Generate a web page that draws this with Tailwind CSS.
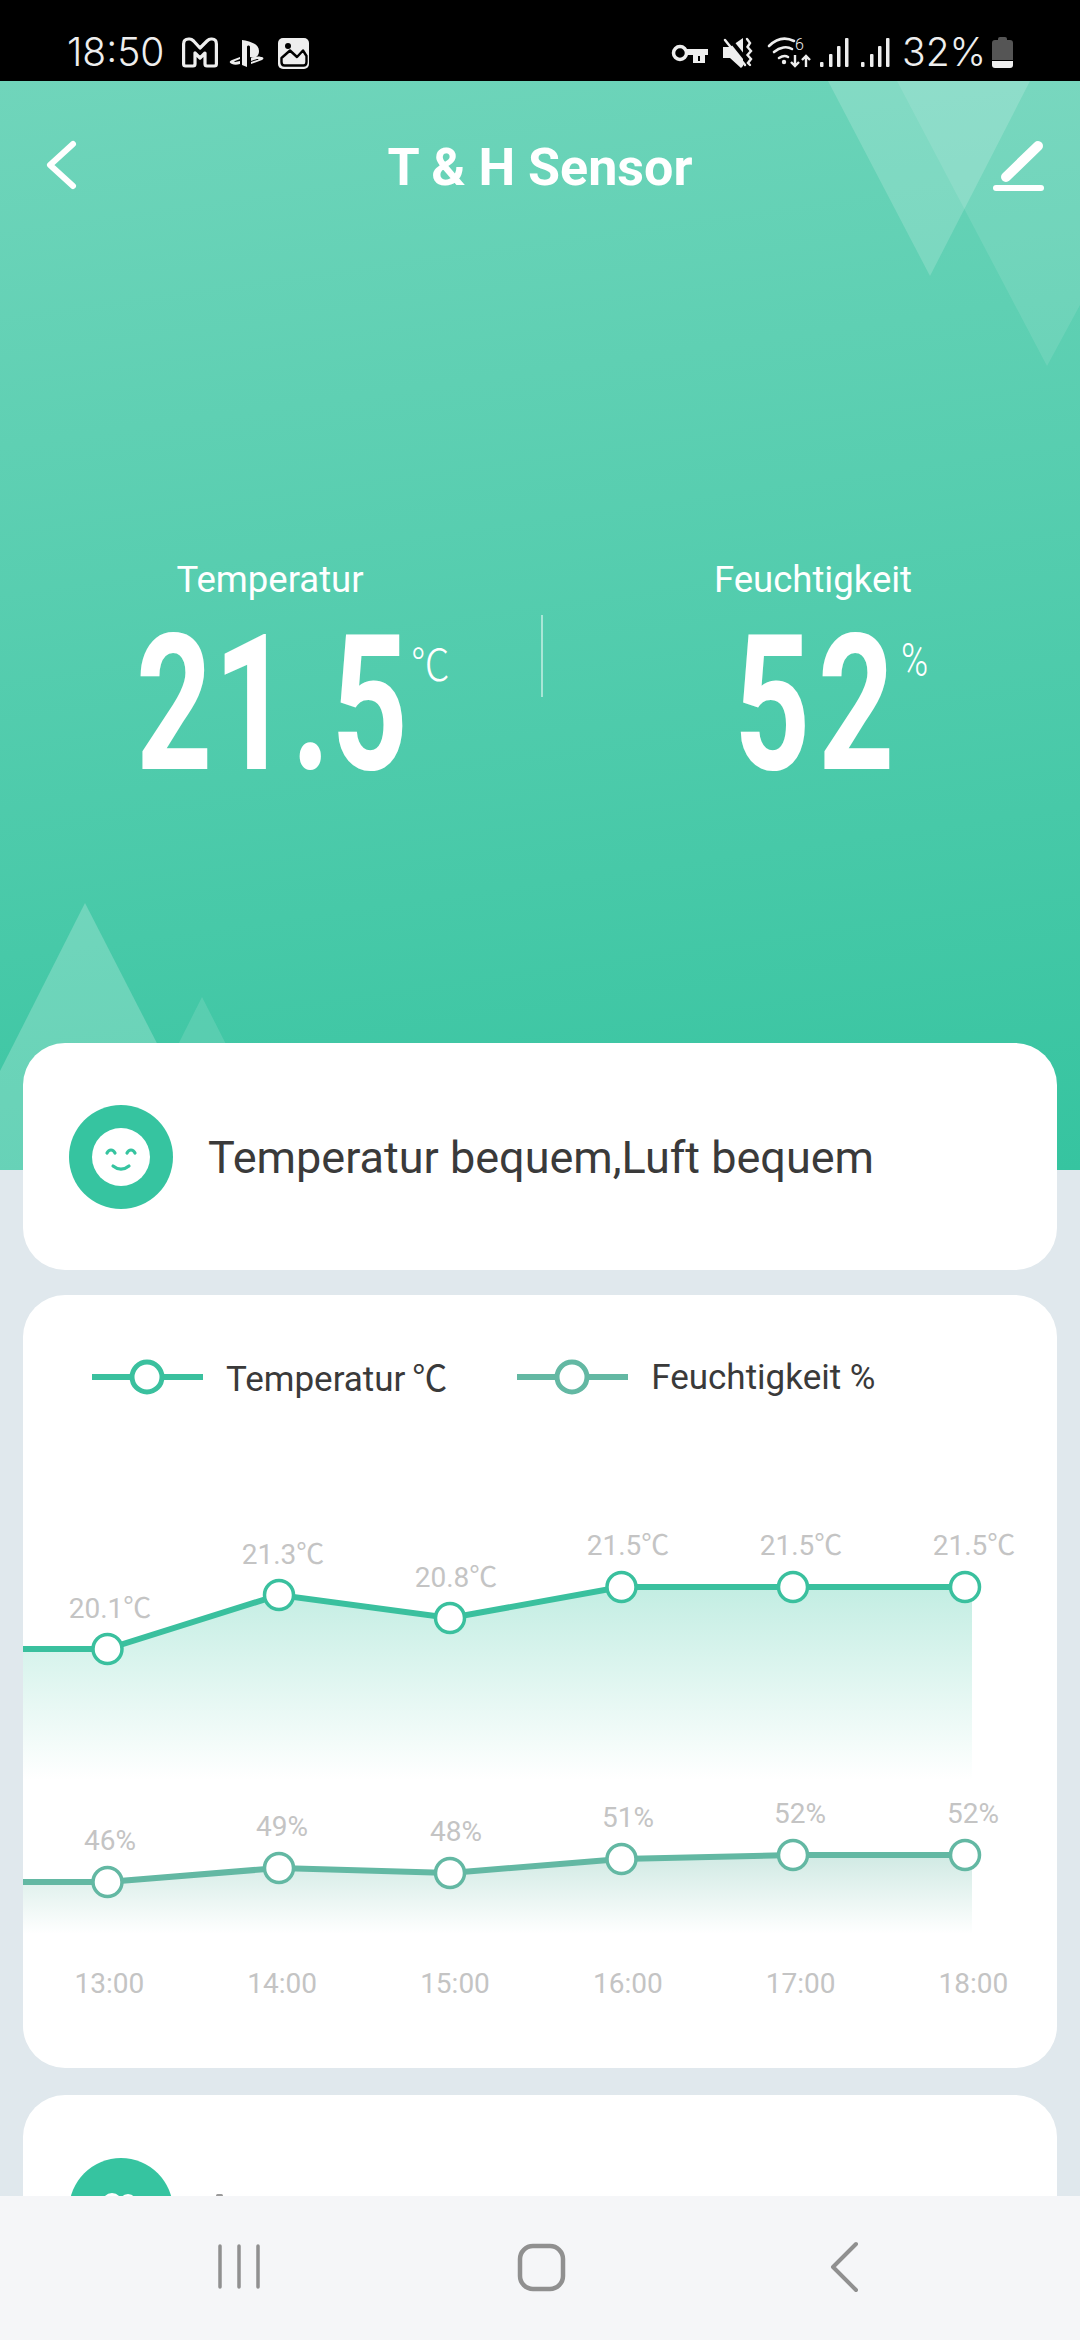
<!DOCTYPE html>
<html><head><meta charset="utf-8">
<script src="https://cdn.jsdelivr.net/npm/@tailwindcss/browser@4"></script>
</head>
<body>
<div class="relative w-[1080px] h-[2340px] overflow-hidden bg-[#e0e8ed] font-['Roboto','Noto_Sans_CJK_SC',sans-serif]">
  <!-- status bar -->
  <div class="relative h-[81px] bg-black text-[#eeeeee] font-['Inter',sans-serif] font-light">
    <span class="absolute left-[67px] top-[29px] text-[39px] leading-[46px]">18:50</span>
    <svg class="absolute left-0 top-0" width="1080" height="81" viewBox="0 0 1080 81" fill="none">
      <path d="M183.6 64V44q0-5 5-5h1q2 0 4 2L200 48L207 41q2-2 4-2h1q4.4 0 4.4 5V64q0 2-2 2H207q-2 0-2-2V53L200 58L195 53V64q0 2-2 2H185.6q-2 0-2-2z" stroke="#eee" stroke-width="3.2" stroke-linejoin="round"/>
      <path d="M242 40c6 1 17 3 17 11 0 6-5 8-9 6V47c0-2-3-2-3 0v20l-5-2z" fill="#eee"/>
      <path d="M240 57l-8 3c-3 1-3 3 0 4 2 1 5 1 8 0v-3l-5 1c-1 0-1-1 0-1l5-2z" fill="#eee"/>
      <path d="M251 64l11-4c2-1 2-3-1-3-3-1-7 0-10 1v3l6-2c2 0 2 1 0 1l-6 2z" fill="#eee"/>
      <rect x="278" y="38" width="31" height="31" rx="5" fill="#eee"/>
      <path d="M281.5 58L290 50.5L297 57L303 50.5L306.5 56V62q0 3.5-3 3.5H284.5q-3 0-3-3.5Z" fill="#eee" stroke="#000" stroke-width="2.4" stroke-linejoin="round"/>
      <circle cx="288" cy="46" r="3" fill="#000"/>
      <!-- key -->
      <circle cx="680" cy="53" r="6.5" stroke="#eee" stroke-width="3.5"/>
      <path d="M687 49h21v6h-3v8h-12v-8h-6z" fill="#eee"/>
      <path d="M699 56v5" stroke="#000" stroke-width="2"/>
      <!-- mute -->
      <path d="M723 47h7l13-9v28l-2 2-11-10h-7z" fill="#eee"/>
      <path d="M728 37l20 25" stroke="#000" stroke-width="4"/>
      <path d="M725 40l20 25" stroke="#eee" stroke-width="2.5" stroke-linecap="round"/>
      <path d="M747 39l3 4-2.500 4 3.500 4-3.500 4 3.500 4-3 4 2 2" stroke="#eee" stroke-width="2.4" stroke-linecap="round"/>
      <!-- wifi -->
      <path d="M769 46c8-8 17-9 25-5M774 52c6-5 13-6 18-3M779 58c3-2 6-3 9-1" stroke="#eee" stroke-width="2.6" stroke-linecap="round"/>
      <circle cx="784" cy="62" r="2.2" fill="#eee"/>
      <path d="M795 55v11m-4-4l4 4 4-4M806 67v-11m-4 4l4-4 4 4" stroke="#eee" stroke-width="2.4"/>
      <text x="795" y="50" font-size="16" fill="#eee" font-family="Roboto">6</text>
      <!-- signal -->
      <g fill="#eee">
        <rect x="820" y="62" width="3.5" height="5" rx="1"/><rect x="829" y="54" width="3.5" height="13" rx="1"/><rect x="837" y="46" width="3.5" height="21" rx="1"/><rect x="845" y="38" width="3.5" height="29" rx="1"/>
        <rect x="861" y="62" width="3.5" height="5" rx="1"/><rect x="870" y="54" width="3.5" height="13" rx="1"/><rect x="878" y="46" width="3.5" height="21" rx="1"/><rect x="886" y="38" width="3.5" height="29" rx="1"/>
      </g>
      <!-- battery -->
      <path d="M998 40v-1q0-2 2-2h5q2 0 2 2v1h3q3 0 3 3v17h-21V43q0-3 3-3z" fill="#555"/>
      <path d="M992 61h21v4q0 3-3 3h-15q-3 0-3-3z" fill="#eee"/>
    </svg>
    <span class="absolute left-[902px] top-[29px] text-[39px] leading-[46px]">32%</span>
  </div>

  <!-- header -->
  <div class="relative h-[1089px] overflow-hidden bg-[linear-gradient(172deg,#70d5bb_0%,#36c4a0_100%)] text-white">
    <svg class="absolute left-0 top-0" width="1080" height="1089" viewBox="0 81 1080 1089">
      <path d="M828 81H1030L930 276Z" fill="#fff" fill-opacity=".17"/>
      <path d="M897 81H1201L1047 366Z" fill="#fff" fill-opacity=".1"/>
      <path d="M85 903L-50 1170H222Z" fill="#fff" fill-opacity=".22"/>
      <path d="M202 997L115 1170H290Z" fill="#fff" fill-opacity=".12"/>
      <path d="M73 144L50 165L73 186" fill="none" stroke="#fff" stroke-width="6" stroke-linecap="round" stroke-linejoin="round"/>
      <path d="M1038 146L1006 177" fill="none" stroke="#fff" stroke-width="10" stroke-linecap="round"/>
      <path d="M996 188H1041" fill="none" stroke="#fff" stroke-width="6" stroke-linecap="round"/>
    </svg>
    <div class="absolute left-0 right-0 top-[58px] text-center text-[52px] leading-[58px] font-bold">T &amp; H Sensor</div>

    <div class="absolute left-0 top-[478px] w-[1080px] h-[300px]">
      <div class="absolute left-[120px] w-[300px] text-center text-[36.5px] leading-[42px] top-0">Temperatur</div>
      <div class="absolute left-[663px] w-[300px] text-center text-[36.5px] leading-[42px] top-0">Feuchtigkeit</div>
      <div class="absolute left-[541px] top-[56px] w-[2px] h-[82px] bg-white/50"></div>
      <div class="absolute left-[136px] top-[50px] w-[300px] h-[190px] origin-left scale-x-[0.7] text-[190px] leading-[190px] font-bold tracking-[2px] whitespace-nowrap">21.5</div>
      <div class="absolute left-[734px] top-[50px] w-[300px] h-[190px] origin-left scale-x-[0.7] text-[190px] leading-[190px] font-bold tracking-[11px] whitespace-nowrap">52</div>
      <div class="absolute left-[411px] top-[77px] text-[44px] leading-[52px] origin-left scale-x-[0.88] font-['Noto_Sans_CJK_SC',sans-serif] font-light">℃</div>
      <div class="absolute left-[901px] top-[76px] text-[46px] leading-[50px] font-light origin-left scale-x-[0.8]">%</div>
    </div>
  </div>

  <!-- card 1 -->
  <div class="relative mx-[23px] -mt-[127px] h-[227px] rounded-[42px] bg-white flex items-center pl-[46px] gap-[35px]">
    <div class="w-[104px] h-[104px] rounded-full bg-[#36c4a0] flex items-center justify-center">
      <svg width="58" height="58" viewBox="0 0 58 58">
        <circle cx="29" cy="29" r="29" fill="#fff"/>
        <path d="M15 25c2-4 6-4 8 0M35 25c2-4 6-4 8 0M21 38c5 4 11 4 16 0" fill="none" stroke="#36c4a0" stroke-width="3.2" stroke-linecap="round"/>
      </svg>
    </div>
    <div class="text-[45px] leading-[54px] text-[#3a3a3a] pt-[2px]">Temperatur bequem,Luft bequem</div>
  </div>

  <!-- card 2 -->
  <div class="relative mx-[23px] mt-[25px] h-[773px] rounded-[42px] bg-white overflow-hidden">
    <div class="flex items-start pl-[69px] pt-[63px]">
      <svg width="111" height="40" viewBox="0 0 111 40">
        <path d="M0 19H111" stroke="#3ac09e" stroke-width="6"/>
        <circle cx="55" cy="19" r="15" fill="#fff" stroke="#3ac09e" stroke-width="5"/>
      </svg>
      <span class="ml-[23px] text-[35px] leading-[40px] text-[#3a3a3a]">Temperatur <span class="font-['Noto_Sans_CJK_SC',sans-serif] leading-none -ml-[2px]">℃</span></span>
      <svg class="ml-[70px]" width="111" height="40" viewBox="0 0 111 40">
        <path d="M0 19H111" stroke="#63b8a3" stroke-width="6"/>
        <circle cx="55" cy="19" r="15" fill="#fff" stroke="#63b8a3" stroke-width="5"/>
      </svg>
      <span class="ml-[23px] text-[35px] leading-[40px] text-[#3a3a3a]">Feuchtigkeit %</span>
    </div>

    <svg class="absolute left-0 top-0" width="1034" height="773" viewBox="23 1295 1034 773" font-family="Roboto, 'Noto Sans CJK SC', sans-serif" font-size="28" fill="#c4c4c4" text-anchor="middle">
      <defs>
        <linearGradient id="a" x1="0" y1="1587" x2="0" y2="1780" gradientUnits="userSpaceOnUse"><stop offset="0" stop-color="#36c4a0" stop-opacity=".3"/><stop offset="1" stop-color="#36c4a0" stop-opacity="0"/></linearGradient>
        <linearGradient id="b" x1="0" y1="1855" x2="0" y2="1934" gradientUnits="userSpaceOnUse"><stop offset="0" stop-color="#63b8a3" stop-opacity=".3"/><stop offset="1" stop-color="#63b8a3" stop-opacity="0"/></linearGradient>
      </defs>
      <path d="M23 1649H107L279 1595L450 1618L621 1587H972V1780H23Z" fill="url(#a)"/>
      <path d="M23 1882H107L279 1868L450 1873L621 1859L793 1855H972V1934H23Z" fill="url(#b)"/>
      <path d="M23 1649H107L279 1595L450 1618L621 1587H965" fill="none" stroke="#3ac09e" stroke-width="6"/>
      <path d="M23 1882H107L279 1868L450 1873L621 1859L793 1855H965" fill="none" stroke="#63b8a3" stroke-width="6"/>
      <g fill="#fff" stroke="#3ac09e" stroke-width="3.5">
        <circle cx="107.5" cy="1649" r="14.5"/><circle cx="279" cy="1595" r="14.5"/><circle cx="450" cy="1618" r="14.5"/><circle cx="621.5" cy="1587" r="14.5"/><circle cx="793" cy="1587" r="14.5"/><circle cx="965" cy="1587" r="14.5"/>
      </g>
      <g fill="#fff" stroke="#63b8a3" stroke-width="3.5">
        <circle cx="107.5" cy="1882" r="14.5"/><circle cx="279" cy="1868" r="14.5"/><circle cx="450" cy="1873" r="14.5"/><circle cx="621.5" cy="1859" r="14.5"/><circle cx="793" cy="1855" r="14.5"/><circle cx="965" cy="1855" r="14.5"/>
      </g>
      <g>
        <text x="110" y="1618">20.1<tspan font-family="'Noto Sans CJK SC'">℃</tspan></text><text x="283" y="1564">21.3<tspan font-family="'Noto Sans CJK SC'">℃</tspan></text><text x="456" y="1587">20.8<tspan font-family="'Noto Sans CJK SC'">℃</tspan></text><text x="628" y="1555">21.5<tspan font-family="'Noto Sans CJK SC'">℃</tspan></text><text x="801" y="1555">21.5<tspan font-family="'Noto Sans CJK SC'">℃</tspan></text><text x="974" y="1555">21.5<tspan font-family="'Noto Sans CJK SC'">℃</tspan></text>
      </g>
      <text x="110" y="1850">46%</text><text x="282" y="1836">49%</text><text x="456" y="1841">48%</text><text x="628" y="1827">51%</text><text x="800" y="1823">52%</text><text x="973" y="1823">52%</text>
    </svg>

    <div class="absolute left-0 top-[671px] w-[1034px] grid grid-cols-[repeat(6,172.8px)] text-center text-[28px] leading-[36px] text-[#c4c4c4]">
      <span>13:00</span><span>14:00</span><span>15:00</span><span>16:00</span><span>17:00</span><span>18:00</span>
    </div>
  </div>

  <!-- card 3 -->
  <div class="relative mx-[23px] mt-[27px] h-[300px] rounded-[42px] bg-white pl-[46px] pt-[63px]">
    <div class="relative w-[104px] h-[104px] rounded-full bg-[#36c4a0] overflow-hidden">
      <span class="absolute left-[33px] top-[35px] w-[20px] h-[20px] rounded-full bg-white"></span>
      <span class="absolute left-[50px] top-[36px] w-[18px] h-[18px] rounded-full bg-white"></span>
    </div>
    <span class="absolute left-[193px] top-[99px] w-[7px] h-[3px] rounded-full bg-[#9a9a9a]"></span>
  </div>

  <!-- navigation bar -->
  <div class="absolute left-0 right-0 bottom-0 h-[144px] bg-[#f5f6f8]">
    <svg class="absolute left-0 top-0" width="1080" height="144" viewBox="0 2196 1080 144" fill="none" stroke="#909090">
      <path d="M220 2246V2287M239 2246V2287M258 2246V2287" stroke-width="3.5" stroke-linecap="round"/>
      <rect x="520" y="2246" width="43" height="43" rx="13" stroke-width="4.5"/>
      <path d="M856 2244L833 2267L856 2290" stroke-width="4" stroke-linecap="round" stroke-linejoin="round"/>
    </svg>
  </div>
</div>
</body></html>
